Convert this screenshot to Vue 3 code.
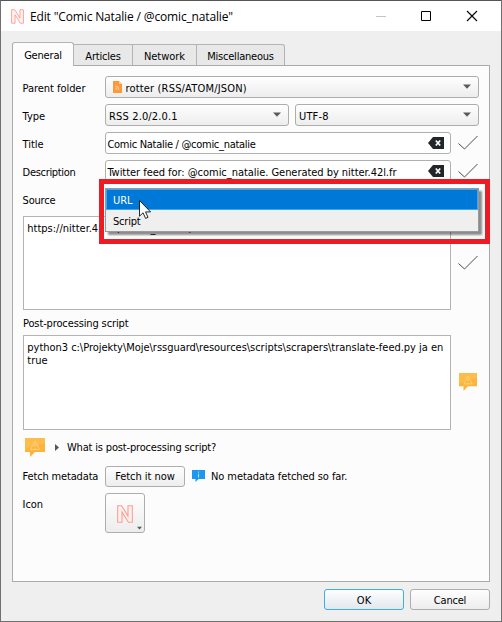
<script setup>
import { h } from 'vue'

const spacing = {
  'Edit "Comic Natalie / @comic_natalie"': -0.15,
  General: -0.18, Articles: -0.2, Network: -0.02, Miscellaneous: -0.22,
  'Parent folder': -0.05, 'rotter (RSS/ATOM/JSON)': 0.18, 'RSS 2.0/2.0.1': 0.15, 'UTF-8': 0.15,
  Title: -0.05, 'Comic Natalie / @comic_natalie': -0.28, Description: -0.32,
  'Twitter feed for: @comic_natalie. Generated by nitter.42l.fr': -0.04,
  Source: -0.2, URL: -0.1, Script: -0.2, 'https://nitter.42l.fr/comic_natalie/rss': 0,
  'Post-processing script': -0.13,
  'What is post-processing script?': -0.17, 'Fetch metadata': -0.16, 'Fetch it now': -0.04,
  'No metadata fetched so far.': -0.08, Icon: -0.1, Cancel: -0.2, OK: 0.2
}
const Txt = (props) => h('span', { style: { letterSpacing: (spacing[props.t] ?? 0) + 'px' } }, props.t)
Txt.props = ['t']

const NIcon = () => h('svg', { viewBox: '0 0 16 18' }, [
  h('path', { d: 'M.7.7H4.6L11 11V.7H15.3V17.3H11.5L5 7V17.3H.7Z', fill: '#fff3f1', stroke: '#ff9a92', 'stroke-width': 1.1 })
])
const Check = () => h('svg', { viewBox: '0 0 20 15' }, [
  h('path', { d: 'M.5 8.5L6.5 14L19.5 1', fill: 'none', stroke: '#4d4d4d', 'stroke-width': 1 })
])
const Warn = () => h('svg', { viewBox: '0 0 20 19', preserveAspectRatio: 'none' }, [
  h('path', { d: 'M0 0H20V14H10L5 19V14H0Z', fill: '#fdb43d' }),
  h('path', { d: 'M0 0H20V5L0 11Z', fill: '#ffc45a', opacity: 0.5 }),
  h('path', { d: 'M10 3L5.5 11.5H14.5ZM10 6V9M10 10V11', fill: 'none', stroke: '#ffd07a', 'stroke-width': 1 })
])
const Clear = () => h('svg', { viewBox: '0 0 16 12' }, [
  h('path', { d: 'M5 0H16V12H5L0 6Z', fill: '#232629' }),
  h('path', { d: 'M7.8 3.5L12.2 8.5M12.2 3.5L7.8 8.5', stroke: '#fff', 'stroke-width': 1.7 })
])
const Arrow = () => h('svg', { viewBox: '0 0 8 5' }, [h('path', { d: 'M0 .5H8L4 4.8Z', fill: '#5a5a5a' })])
</script>

<template>
  <div class="window">
    <header class="titlebar">
      <NIcon class="app-icon" />
      <Txt class="caption" t='Edit "Comic Natalie / @comic_natalie"' />
      <svg class="controls" viewBox="0 0 102 16">
        <path d="M8 8.5H18" stroke="#c4c4c4" />
        <path d="M53.5 3.5H62.5V12.5H53.5Z" fill="none" stroke="#000" />
        <path d="M99 3L109 13M109 3L99 13" stroke="#000" stroke-width="1.1" />
      </svg>
    </header>

    <main class="body">
      <nav class="tabs">
        <div class="tab active"><Txt t="General" /></div>
        <div class="tab articles"><Txt t="Articles" /></div>
        <div class="tab network"><Txt t="Network" /></div>
        <div class="tab misc"><Txt t="Miscellaneous" /></div>
      </nav>

      <section class="page">
        <div class="row">
          <Txt class="label" t="Parent folder" />
          <div class="combo">
            <svg class="folder" viewBox="0 0 9 12">
              <path d="M0 0H6L9 3V12H0Z" fill="#fb9a3c" /><path d="M6 0L9 3H6Z" fill="#ffd09c" />
              <path d="M2 5Q6 5 6 9M2 7Q4 7 4 9" fill="none" stroke="#ffd9b0" stroke-width=".8" />
            </svg>
            <Txt t="rotter (RSS/ATOM/JSON)" /><Arrow class="arrow" />
          </div>
        </div>
        <div class="row">
          <Txt class="label" t="Type" />
          <div class="combo"><Txt t="RSS 2.0/2.0.1" /><Arrow class="arrow" /></div>
          <div class="combo second"><Txt t="UTF-8" /><Arrow class="arrow" /></div>
        </div>
        <div class="row">
          <Txt class="label" t="Title" />
          <div class="field"><Txt t="Comic Natalie / @comic_natalie" /><Clear class="clear" /></div>
          <Check class="check" />
        </div>
        <div class="row">
          <Txt class="label" t="Description" />
          <div class="field"><Txt t="Twitter feed for: @comic_natalie. Generated by nitter.42l.fr" /><Clear class="clear" /></div>
          <Check class="check" />
        </div>
        <div class="row source">
          <Txt class="label" t="Source" />
          <div class="combo"></div>
          <div class="highlight"></div>
          <div class="popup">
            <div class="option selected"><Txt t="URL" /></div>
            <div class="option"><Txt t="Script" /></div>
            <svg class="cursor" viewBox="0 0 12 19">
              <path d="M.5.5V16.2L4.1 12.8L6.6 18.4L9 17.3L6.5 11.9H11.6Z" fill="#fff" stroke="#111" stroke-width=".9" />
            </svg>
          </div>
        </div>
        <div class="area-row url">
          <div class="area"><Txt t="https://nitter.42l.fr/comic_natalie/rss" /></div>
          <Check class="check" />
        </div>
        <div class="heading"><Txt t="Post-processing script" /></div>
        <div class="area-row">
          <div class="area script">python3 c:\Projekty\Moje\rssguard\resources\scripts\scrapers\translate-feed.py ja en<br>true</div>
          <Warn class="warn" />
        </div>
        <div class="help">
          <Warn class="warn-big" />
          <svg class="expand" viewBox="0 0 4 7"><path d="M0 0L4 3.5L0 7Z" fill="#555" /></svg>
          <Txt t="What is post-processing script?" />
        </div>
        <div class="row fetch">
          <Txt class="label" t="Fetch metadata" />
          <button class="btn"><Txt t="Fetch it now" /></button>
          <svg class="info" viewBox="0 0 13 12">
            <path d="M0 0H13V9H6.5L3.5 12V9H0Z" fill="#1e97f0" />
            <path d="M6.5 1.6V2.7M6.5 3.8V7.5" stroke="#a9dcff" stroke-width="1.1" />
          </svg>
          <Txt t="No metadata fetched so far." />
        </div>
        <div class="row icon-row">
          <Txt class="label" t="Icon" />
          <button class="btn icon-btn"><NIcon class="feed-icon" /><Arrow class="mini" /></button>
        </div>
      </section>

      <footer class="footer">
        <button class="btn ok"><Txt t="OK" /></button>
        <button class="btn"><Txt t="Cancel" /></button>
      </footer>
    </main>
  </div>
</template>

<style>
body { overflow: hidden; }
</style>

<style scoped>
* { box-sizing: border-box; }
svg { display: block; flex: none; }
.window {
  width: 502px; height: 622px; border: 1px solid #707070; border-top-color: #555;
  background: #efefef; color: #000; display: flex; flex-direction: column;
  font: 11px/13px "DejaVu Sans Condensed", "DejaVu Sans", sans-serif; white-space: nowrap;
}
.titlebar { height: 30px; flex: none; background: #fff; display: flex; align-items: center; padding-left: 10px; }
.app-icon { width: 13px; height: 15px; margin-right: 6px; }
.caption { font: 12px/16px "Open Sans", sans-serif; padding-top: 1px; }
.controls { width: 102px; height: 16px; margin: -1px 31px 0 auto; overflow: visible; }
.body { flex: 1; padding: 11px 11px 0; }
.tabs { display: flex; align-items: flex-end; height: 24px; margin-bottom: -1px; position: relative; }
.tab {
  height: 21px; border: 1px solid #b4b4b4; border-bottom: 0; border-left: 0; background: #e8e8e8;
  display: flex; align-items: center; justify-content: center; margin-bottom: 1px; padding-top: 3px;
}
.tab.active { width: 62px; height: 24px; margin: 0; background: #fcfcfc; border-left: 1px solid #aaa; border-radius: 3px 3px 0 0; padding: 1px 0 0; }
.articles { width: 59px; }
.network { width: 64px; }
.misc { width: 88px; border-top-right-radius: 3px; }
.page { width: 478px; height: 517px; border: 1px solid #aaa; background: #fcfcfc; padding: 10px; }
.row { display: flex; height: 22px; margin-bottom: 6px; align-items: center; position: relative; }
.label { width: 82px; flex: none; padding-top: 3px; margin-left: -.4px; margin-right: .4px; }
.fetch .label { padding-top: 1px; }
.combo, .btn { border: 1px solid #adadad; border-radius: 3px; background: linear-gradient(#fefefe, #ededed); }
.combo { flex: 1; height: 22px; padding: 0 7px 0 3px; display: flex; align-items: center; }
.combo > span, .field > span { padding-top: 3px; }
.row > .combo { max-width: 374px; }
.row > .combo:has(+ .second) { flex: none; width: 184px; }
.combo.second { margin-left: 6px; }
.folder { width: 9px; height: 12px; margin: 0 3.4px 0 4px; }
.arrow { width: 8px; height: 5px; margin: -1px 0 0 auto; }
.field { width: 346px; height: 22px; background: #fff; border: 1px solid #b0b0b0; border-radius: 3px; display: flex; align-items: center; padding: 0 6px 0 1.4px; }
.clear { width: 16px; height: 12px; margin: 0 0 0 auto; }
.check { width: 20px; height: 15px; margin: 0 0 1px 7px; }
.highlight { position: absolute; z-index: 2; left: 76px; top: -9px; width: 391px; height: 65px; border: 5px solid #ed1c24; }
.popup { position: absolute; z-index: 3; left: 82px; top: 0; width: 374px; height: 44px; border: 1px solid #9a9a9a; background: #efefef; box-shadow: 3px 3px 2px rgba(0, 0, 0, .45); }
.option { height: 21px; padding: 4px 6px; border: 1px solid transparent; line-height: 13px; }
.selected { background: #0078d7; border-color: #3da5f5; color: #fff; }
.cursor { position: absolute; left: 33px; top: 11px; width: 12px; height: 19px; }
.area-row { display: flex; align-items: center; }
.area { width: 428px; height: 94px; border: 1px solid #b4b4b4; background: #fff; padding: 5px 3.3px; }
.area.script { height: 95px; letter-spacing: -.027px; }
.heading { height: 25px; padding-top: 7px; }
.warn { width: 18px; height: 18px; margin: 0 0 2px 8px; }
.help { display: flex; align-items: center; height: 35px; padding-left: 2px; }
.warn-big { width: 20px; height: 19px; margin-right: 10px; }
.expand { width: 4px; height: 7px; margin-right: 8px; }
.btn { font: inherit; color: inherit; width: 80px; height: 21px; padding: 1px 0 0; display: flex; align-items: center; justify-content: center; }
.info { width: 13px; height: 12px; margin: 0 6px 0 7px; }
.icon-row { height: 40px; align-items: flex-start; }
.icon-row .label { padding-top: 5px; }
.icon-btn { width: 40px; height: 40px; position: relative; }
.feed-icon { width: 16px; height: 18px; }
.mini { position: absolute; right: 2px; bottom: 2px; width: 5px; height: 4px; }
.footer { display: flex; justify-content: flex-end; gap: 6px; padding-top: 7px; }
.ok { border-color: #3daee9; background: linear-gradient(#fdfefe, #e3e8ee); }
</style>
